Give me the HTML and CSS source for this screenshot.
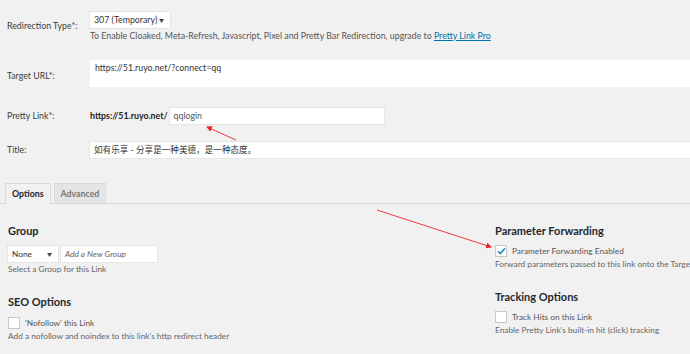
FILE: index.html
```
<!DOCTYPE html>
<html lang="en">
<head>
  <meta charset="utf-8">
  <title>Pretty Link</title>
  <link rel="stylesheet" href="styles.css">
</head>
<body>
  <div class="page">
    <div class="form-table">
      <div class="row row-type">
        <div class="label">Redirection Type*:</div>
        <div class="field">
          <div class="select select-type">307 (Temporary) <span class="caret">▼</span></div>
          <div class="desc-dark">To Enable Cloaked, Meta-Refresh, Javascript, Pixel and Pretty Bar Redirection, upgrade to <a href="#">Pretty Link Pro</a></div>
        </div>
      </div>

      <div class="row row-target">
        <div class="label">Target URL*:</div>
        <div class="field">
          <div class="textarea">https://51.ruyo.net/?connect=qq</div>
        </div>
      </div>

      <div class="row row-slug">
        <div class="label">Pretty Link*:</div>
        <div class="field inline">
          <strong class="base">https://51.ruyo.net/</strong>
          <div class="input input-slug">qqlogin</div>
        </div>
      </div>

      <div class="row row-title">
        <div class="label">Title:</div>
        <div class="field">
          <div class="input input-title">如有乐享 - 分享是一种美德，是一种态度。</div>
        </div>
      </div>
    </div>

    <div class="tabs">
      <div class="tab active">Options</div>
      <div class="tab">Advanced</div>
    </div>

    <div class="options">
      <div class="col">
        <h3>Group</h3>
        <div class="inline group-row">
          <div class="select select-group">None <span class="caret">▼</span></div>
          <div class="input input-group">Add a New Group</div>
        </div>
        <div class="desc">Select a Group for this Link</div>

        <h3 class="spaced">SEO Options</h3>
        <label class="check"><span class="box"></span>'Nofollow' this Link</label>
        <div class="desc">Add a nofollow and noindex to this link's http redirect header</div>
      </div>

      <div class="col col-right">
        <h3>Parameter Forwarding</h3>
        <label class="check"><span class="box checked">
          <svg width="9" height="8" viewBox="0 0 9 8"><path d="M1 4.2 L3.4 6.6 L8 1.2" fill="none" stroke="#1e8cbe" stroke-width="1.6"/></svg>
        </span>Parameter Forwarding Enabled</label>
        <div class="desc">Forward parameters passed to this link onto the Target URL</div>

        <h3 class="spaced">Tracking Options</h3>
        <label class="check"><span class="box"></span>Track Hits on this Link</label>
        <div class="desc">Enable Pretty Link's built-in hit (click) tracking</div>
      </div>
    </div>
  </div>

  <svg class="arrows" width="690" height="354" viewBox="0 0 690 354">
    <defs>
      <marker id="head" markerWidth="6" markerHeight="6" refX="5" refY="3" orient="auto" markerUnits="userSpaceOnUse">
        <path d="M0 0 L6 3 L0 6 Z" fill="#e8262a"/>
      </marker>
    </defs>
    <line x1="236" y1="140" x2="207" y2="127" stroke="#e8262a" stroke-width="0.9" marker-end="url(#head)"/>
    <line x1="377" y1="210" x2="491" y2="247" stroke="#e8262a" stroke-width="0.9" marker-end="url(#head)"/>
  </svg>
</body>
</html>
```

FILE: styles.css
```
body {
  margin: 0;
  background-color: #f1f1f1;
  font-family: Lato, 'Noto Sans CJK SC', sans-serif;
  font-size: 8.8px;
  line-height: 12px;
  color: #444;
  overflow: hidden;
}
.page {
  width: 690px;
  height: 354px;
  overflow: hidden;
}
.form-table {
  padding: 12px 0 0 7px;
}
.row {
  display: flex;
  align-items: flex-start;
}
.label {
  width: 83px;
  flex-shrink: 0;
  color: #3c3c3c;
}
.field {
  flex: 1;
  min-width: 0;
}
.inline {
  display: flex;
  align-items: center;
}
.select, .input, .textarea {
  background-color: #fff;
  box-sizing: border-box;
  color: #333;
  white-space: nowrap;
}
.select {
  display: flex;
  align-items: center;
  justify-content: space-between;
  height: 16px;
  padding: 0 6px 0 4px;
  box-shadow: 0 0 0 1px #e4e4e4;
}
.caret {
  font-size: 5px;
  color: #444;
}
.select-type {
  width: 80px;
}
.row-type .label {
  padding-top: 8px;
}
.desc-dark {
  margin-top: 2px;
  color: #555;
}
.desc-dark a {
  color: #0073aa;
}
.row-target {
  margin-top: 18px;
}
.row-target .label {
  padding-top: 10px;
}
.textarea {
  height: 27px;
  padding: 2px 5px;
}
.row-slug {
  margin-top: 21px;
}
.row-slug .label {
  padding-top: 2px;
}
.base {
  color: #222;
  margin-right: 2px;
}
.input {
  height: 16px;
  padding: 0 4px;
  display: flex;
  align-items: center;
  box-shadow: 0 0 0 1px #e6e6e6;
}
.input-slug {
  width: 214px;
  color: #555;
}
.row-title {
  margin-top: 18px;
}
.row-title .label {
  padding-top: 2px;
}
.input-title {
  font-size: 8.6px;
}
.tabs {
  display: flex;
  align-items: flex-end;
  gap: 3px;
  margin-top: 25px;
  padding-left: 5px;
  border-bottom: 1px solid #d9d9d9;
  height: 20px;
}
.tab {
  height: 20px;
  box-sizing: border-box;
  padding: 0 6px;
  display: flex;
  align-items: center;
  font-weight: bold;
  color: #777;
  background-color: #e4e4e4;
  border: 1px solid #dadada;
  border-bottom: none;
}
.tab.active {
  color: #222;
  background-color: #f1f1f1;
  height: 21px;
  margin-bottom: -1px;
}
.options {
  display: flex;
  padding: 0 8px;
  font-size: 8.3px;
}
.col {
  width: 487px;
  flex-shrink: 0;
}
.col-right {
  width: auto;
  white-space: nowrap;
}
h3 {
  margin: 20px 0 6px;
  font-size: 11px;
  line-height: 14px;
  font-weight: bold;
  color: #23282d;
}
h3.spaced {
  margin-top: 20px;
}
.group-row {
  margin-top: 8px;
}
.select-group {
  width: 50px;
}
.input-group {
  width: 96px;
  margin-left: 3px;
  font-style: italic;
  color: #666;
}
.desc {
  margin-top: 1px;
  color: #666;
}
.check {
  display: flex;
  align-items: center;
  color: #555;
  height: 13px;
  margin-top: 7px;
}
.col-right .check {
  margin-top: 3px;
}
.box {
  width: 12px;
  height: 12px;
  box-sizing: border-box;
  background-color: #fff;
  border: 1px solid #c8c8c8;
  margin-right: 5px;
  display: flex;
  align-items: center;
  justify-content: center;
}
.arrows {
  position: absolute;
  left: 0;
  top: 0;
  pointer-events: none;
}
```
